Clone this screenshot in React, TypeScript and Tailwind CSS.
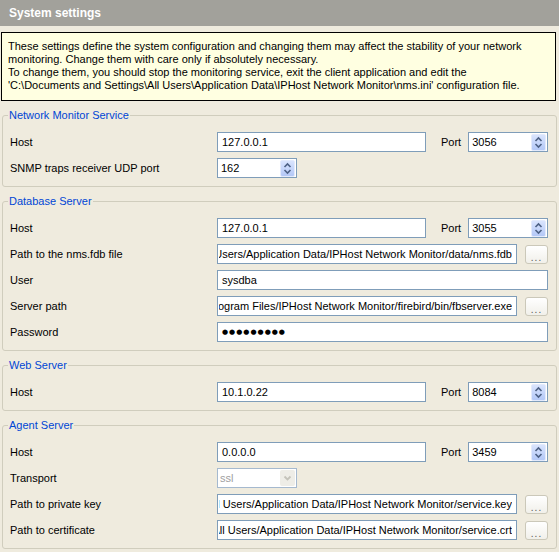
import React from "react";

const FONT = "font-['Liberation_Sans',Arial,sans-serif]";

function SpinArrows() {
  return (
    <div className="w-[15px] h-[17px] mr-[1px] rounded-[2px] bg-gradient-to-b from-[#d9e4fd] to-[#b4c8f7] border border-[#e3eafc] flex items-center justify-center">
      <svg width="9" height="13" viewBox="0 0 9 13">
        <polyline points="1.5,5 4.5,2 7.5,5" fill="none" stroke="#4d6185" strokeWidth="1.6" />
        <polyline points="1.5,8 4.5,11 7.5,8" fill="none" stroke="#4d6185" strokeWidth="1.6" />
      </svg>
    </div>
  );
}

function TextBox({ value, wide = true }: { value: string; wide?: boolean }) {
  return (
    <div className={`h-[20px] border border-[#7f9db9] bg-white flex items-center pl-[4px] ${wide ? "flex-1" : ""}`}>
      <span className="whitespace-nowrap">{value}</span>
    </div>
  );
}

function Spinner({ value }: { value: string }) {
  return (
    <div className="w-[80px] h-[20px] border border-[#7f9db9] bg-white flex items-center justify-between pl-[3px]">
      <span>{value}</span>
      <SpinArrows />
    </div>
  );
}

// long paths show their tail, like the original edit boxes scrolled to the end
function PathBox({ value }: { value: string }) {
  return (
    <div className="flex items-center flex-1">
      <div className="w-[300px] h-[20px] border border-[#7f9db9] bg-white flex items-center pl-[1px] pr-[4px]">
        <span className="block w-full overflow-hidden whitespace-nowrap [direction:rtl] text-left">{value}</span>
      </div>
      <button className="ml-[8px] w-[23px] h-[19px] border border-[#cbc8b9] rounded-[3px] bg-gradient-to-b from-white to-[#f1f0ea] text-[#555] text-[10px] leading-[19px] tracking-[1px] pt-[2px]">
        ...
      </button>
    </div>
  );
}

function Row({ label, children }: { label: string; children: React.ReactNode }) {
  return (
    <div className="flex items-center h-[20px]">
      <div className="w-[207px] shrink-0">{label}</div>
      {children}
    </div>
  );
}

function HostRow({ host, port }: { host: string; port: string }) {
  return (
    <Row label="Host">
      <div className="w-[209px] h-[20px] border border-[#7f9db9] bg-white flex items-center pl-[4px]">{host}</div>
      <span className="ml-[15px] mr-[7px]">Port</span>
      <Spinner value={port} />
    </Row>
  );
}

function Group({ title, children }: { title: string; children: React.ReactNode }) {
  return (
    <fieldset className="mx-[2px] mt-[7px] border border-[#d0cdbd] rounded-[3px] pl-[7px] pr-[8px] pt-[10px] pb-[8px]">
      <legend className="ml-[-2px] px-[1px] leading-[14px] text-[#0046d5]">{title}</legend>
      <div className="flex flex-col gap-[6px]">{children}</div>
    </fieldset>
  );
}

export default function App() {
  return (
    <div className={`w-[559px] h-[552px] overflow-hidden bg-[#efebde] text-[11px] text-black ${FONT}`}>
      {/* title bar */}
      <div className="h-[26px] bg-[#a2a19b] flex items-center pl-[9px] text-white font-bold text-[12px]">
        System settings
      </div>

      {/* notice */}
      <div className="mt-[6px] ml-[1px] mr-[3px] border border-black bg-[#ffffe1] pl-[6px] pt-[7px] pb-[8px] leading-[13px] whitespace-nowrap">
        <div>These settings define the system configuration and changing them may affect the stability of your network</div>
        <div>monitoring. Change them with care only if absolutely necessary.</div>
        <div>To change them, you should stop the monitoring service, exit the client application and edit the</div>
        <div>'C:\Documents and Settings\All Users\Application Data\IPHost Network Monitor\nms.ini' configuration file.</div>
      </div>

      <Group title="Network Monitor Service">
        <HostRow host="127.0.0.1" port="3056" />
        <Row label="SNMP traps receiver UDP port">
          <Spinner value="162" />
        </Row>
      </Group>

      <Group title="Database Server">
        <HostRow host="127.0.0.1" port="3055" />
        <Row label="Path to the nms.fdb file">
          <PathBox value="C:/Documents and Settings/All Users/Application Data/IPHost Network Monitor/data/nms.fdb" />
        </Row>
        <Row label="User">
          <TextBox value="sysdba" />
        </Row>
        <Row label="Server path">
          <PathBox value="C:/Program Files/IPHost Network Monitor/firebird/bin/fbserver.exe" />
        </Row>
        <Row label="Password">
          <div className="flex-1 h-[20px] border border-[#7f9db9] bg-white flex items-center pl-[4px]">
            <span className="text-[7px] tracking-[1px] font-['DejaVu_Sans',sans-serif]">●●●●●●●●●</span>
          </div>
        </Row>
      </Group>

      <Group title="Web Server">
        <HostRow host="10.1.0.22" port="8084" />
      </Group>

      <Group title="Agent Server">
        <HostRow host="0.0.0.0" port="3459" />
        <Row label="Transport">
          <div className="w-[80px] h-[20px] border border-[#a5b9cf] bg-white flex items-center justify-between pl-[2px]">
            <span className="text-[#a0a0a0]">ssl</span>
            <div className="w-[15px] h-[16px] mr-[1px] rounded-[2px] bg-[#eeede7] flex items-center justify-center">
              <svg width="9" height="7" viewBox="0 0 9 7">
                <polyline points="1.5,1.5 4.5,4.5 7.5,1.5" fill="none" stroke="#c4c3ba" strokeWidth="1.8" />
              </svg>
            </div>
          </div>
        </Row>
        <Row label="Path to private key">
          <PathBox value="C:/Documents and Settings/All Users/Application Data/IPHost Network Monitor/service.key" />
        </Row>
        <Row label="Path to certificate">
          <PathBox value="C:/Documents and Settings/All Users/Application Data/IPHost Network Monitor/service.crt" />
        </Row>
      </Group>
    </div>
  );
}
